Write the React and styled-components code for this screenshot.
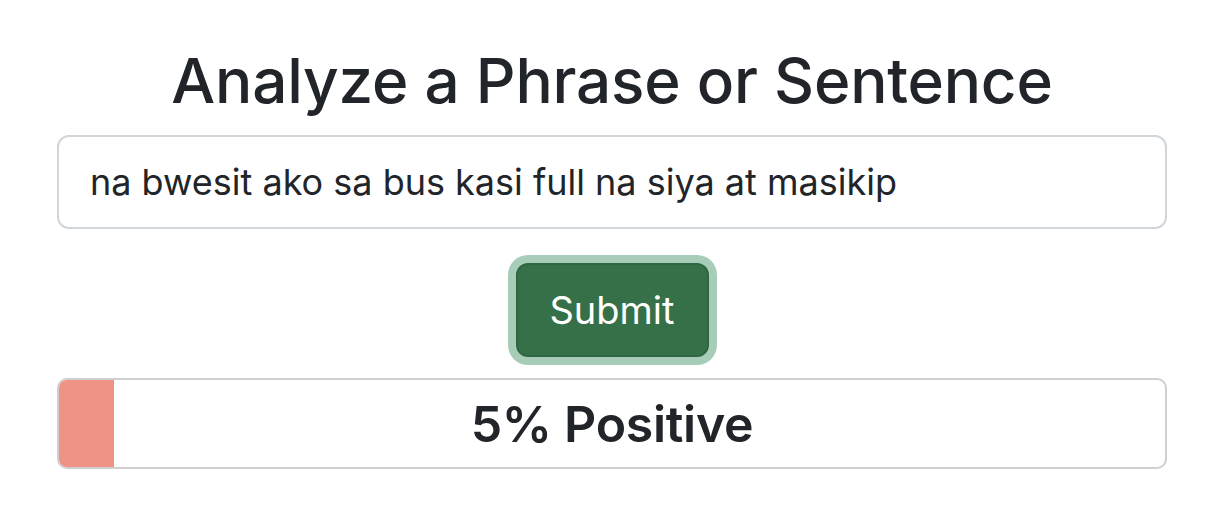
import React from "react";
import styled, { createGlobalStyle } from "styled-components";

const Global = createGlobalStyle`
  html, body { margin: 0; padding: 0; background: #ffffff; }
  body { font-family: Inter, "Noto Sans", sans-serif; color: #212529; }
`;

const Page = styled.main`
  display: flex;
  flex-direction: column;
  align-items: center;
  padding: 46px 59px 0 57px;
`;

const Title = styled.h1`
  margin: 0 0 19px;
  font-size: 62px;
  line-height: 70px;
  font-weight: 500;
  letter-spacing: -0.2px;
  text-align: center;
`;

const TextInput = styled.input`
  box-sizing: border-box;
  width: 100%;
  height: 94px;
  border: 2px solid #d1d6db;
  border-radius: 12px;
  padding: 0 31px;
  font-family: inherit;
  font-size: 36px;
  color: #212529;
  background: #fff;
  outline: none;
`;

const SubmitButton = styled.button`
  margin-top: 34px;
  width: 193px;
  height: 94px;
  border: 2px solid #2f6642;
  border-radius: 12px;
  background: #367049;
  color: #fff;
  font-family: inherit;
  font-size: 38px;
  font-weight: 400;
  box-shadow: 0 0 0 8px #a7cdb9;
  cursor: pointer;
`;

const Bar = styled.div`
  position: relative;
  box-sizing: border-box;
  margin-top: 21px;
  width: 100%;
  height: 91px;
  border: 2px solid #cfcfcf;
  border-radius: 10px;
  overflow: hidden;
  display: flex;
  align-items: center;
  justify-content: center;
`;

const Fill = styled.div`
  position: absolute;
  left: 0;
  top: 0;
  bottom: 0;
  background: #f09387;
`;

const BarLabel = styled.span`
  position: relative;
  font-size: 50px;
  font-weight: 600;
  letter-spacing: -0.3px;
  color: #212529;
`;

export default function App() {
  const pct = 5;
  return (
    <>
      <Global />
      <Page>
        <Title>Analyze a Phrase or Sentence</Title>
        <TextInput defaultValue="na bwesit ako sa bus kasi full na siya at masikip" />
        <SubmitButton>Submit</SubmitButton>
        <Bar>
          <Fill style={{ width: `${pct}%` }} />
          <BarLabel>{pct}% Positive</BarLabel>
        </Bar>
      </Page>
    </>
  );
}
